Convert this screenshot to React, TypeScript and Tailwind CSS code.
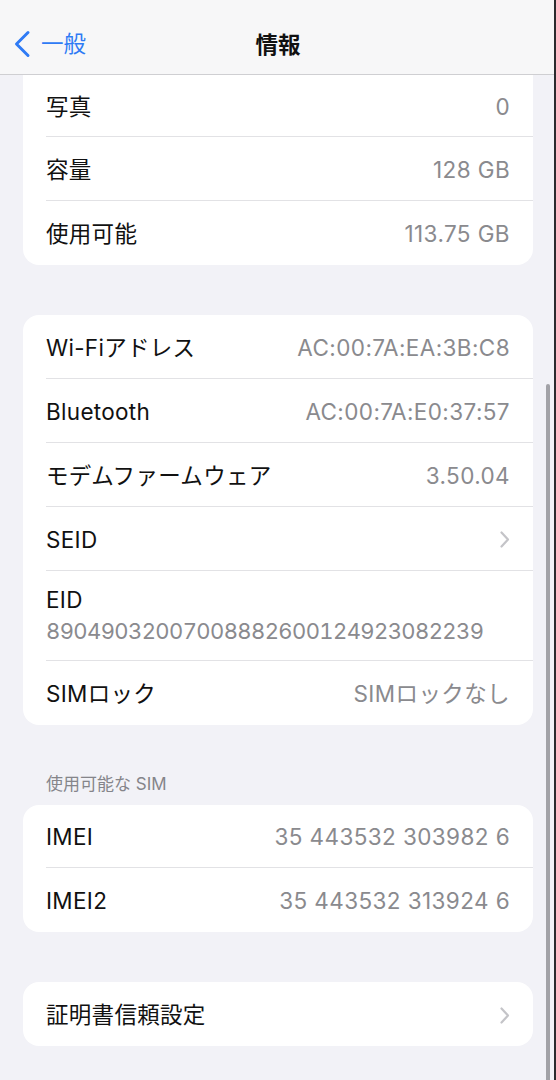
import React from "react";

const font = { fontFamily: 'Inter, "Noto Sans CJK JP", sans-serif' };

function Chevron() {
  return (
    <svg width="10" height="17" viewBox="0 0 10 17" fill="none">
      <path d="M1.5 1.5 L8 8.5 L1.5 15.5" stroke="#c4c4c8" strokeWidth="2.2" strokeLinecap="round" strokeLinejoin="round" />
    </svg>
  );
}

function Row({ label, value, chevron, h = "h-[64px]", divider = true }: { label: string; value?: string; chevron?: boolean; h?: string; divider?: boolean }) {
  return (
    <div className="pl-[23px]">
      <div className={`flex items-center justify-between pr-[23px] pt-[2px] ${h}`}>
        <span className="text-[22.5px] text-[#111] tracking-[0.3px]">{label}</span>
        {value && <span className="text-[22.5px] text-[#8a8a8e] tracking-[0.4px]">{value}</span>}
        {chevron && <Chevron />}
      </div>
      {divider && <div className="h-px bg-[#e2e2e5]" />}
    </div>
  );
}

export default function App() {
  return (
    <div className="relative w-[556px] h-[1080px] overflow-hidden bg-[#f2f2f7]" style={font}>
      <div className="h-[75px] bg-[#f7f7f8] border-b border-[#cfcfd2] flex items-center relative">
        <div className="flex items-center pl-[13px] pt-[14px] gap-[10px]">
          <svg width="18" height="28" viewBox="0 0 18 28" fill="none">
            <path d="M15 2.5 L3.5 14 L15 25.5" stroke="#2f7bf5" strokeWidth="3" strokeLinecap="round" strokeLinejoin="round" />
          </svg>
          <span className="text-[22.5px] text-[#2f7bf5]">一般</span>
        </div>
        <div className="absolute left-0 right-0 top-[28px] text-center text-[22.5px] font-bold text-[#111]">情報</div>
      </div>

      <div className="mx-[23px] bg-white rounded-b-[16px]">
        <Row label="写真" value="0" h="h-[61px]" />
        <Row label="容量" value="128 GB" h="h-[63px]" />
        <Row label="使用可能" value="113.75 GB" divider={false} />
      </div>

      <div className="mx-[23px] mt-[50px] bg-white rounded-[16px]">
        <Row label="Wi-Fiアドレス" value="AC:00:7A:EA:3B:C8" h="h-[63px]" />
        <Row label="Bluetooth" value="AC:00:7A:E0:37:57" h="h-[63px]" />
        <Row label="モデムファームウェア" value="3.50.04" h="h-[63px]" />
        <Row label="SEID" chevron h="h-[63px]" />
        <div className="pl-[23px]">
          <div className="h-[89px] flex flex-col justify-center pr-[23px] pt-[1px]">
            <span className="text-[22.5px] text-[#111] leading-[30px] tracking-[0.3px]">EID</span>
            <span className="text-[22px] text-[#8a8a8e] leading-[32px] tabular-nums tracking-[-0.6px]">89049032007008882600124923082239</span>
          </div>
          <div className="h-px bg-[#e2e2e5]" />
        </div>
        <Row label="SIMロック" value="SIMロックなし" divider={false} />
      </div>

      <div className="pt-[48px] pb-[10px] pl-[46px] text-[17px] leading-[22px] text-[#85858a]">使用可能な SIM</div>

      <div className="mx-[23px] bg-white rounded-[16px]">
        <Row label="IMEI" value="35 443532 303982 6" h="h-[62px]" />
        <Row label="IMEI2" value="35 443532 313924 6" divider={false} />
      </div>

      <div className="mx-[23px] mt-[50px] bg-white rounded-[16px]">
        <Row label="証明書信頼設定" chevron divider={false} />
      </div>

      <div className="absolute left-[546px] top-[384px] w-[4px] h-[700px] rounded-full bg-[#a2a2a7]" />
      <div className="absolute right-0 top-0 w-[2px] h-full bg-[#2b2b2e]" />
    </div>
  );
}
